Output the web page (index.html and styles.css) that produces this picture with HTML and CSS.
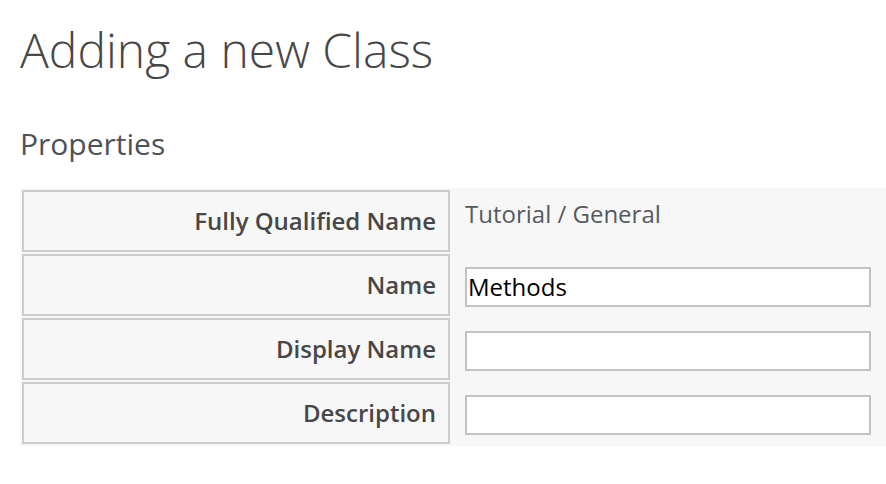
FILE: index.html
```html
<!DOCTYPE html>
<html>
<head>
<meta charset="utf-8">
<link rel="stylesheet" href="styles.css">
</head>
<body>
<div class="page">
  <h1 class="title">Adding a new Class</h1>
  <h2 class="section">Properties</h2>
  <table class="props">
    <tr>
      <th class="label">Fully Qualified Name</th>
      <td class="value"><div class="static">Tutorial / General</div></td>
    </tr>
    <tr>
      <th class="label">Name</th>
      <td class="value"><input class="field" type="text" value="Methods"></td>
    </tr>
    <tr>
      <th class="label">Display Name</th>
      <td class="value"><input class="field" type="text" value=""></td>
    </tr>
    <tr>
      <th class="label">Description</th>
      <td class="value"><input class="field" type="text" value=""></td>
    </tr>
  </table>
</div>
</body>
</html>
```
FILE: styles.css
```css
html, body {
  margin: 0;
  padding: 0;
  background: #ffffff;
  overflow: hidden;
}
body {
  font-family: "Open Sans", "Liberation Sans", sans-serif;
}
.page {
  padding-left: 20px;
}
.title {
  margin: 21px 0 0 0;
  font-size: 48px;
  font-weight: 300;
  line-height: 1.2;
  color: #474747;
}
.section {
  margin: 47px 0 0 0;
  font-size: 30px;
  font-weight: 400;
  line-height: 1.2;
  color: #4d5258;
}
.props {
  margin-top: 26px;
  width: 866px;
  border-collapse: separate;
  border-spacing: 2px;
  background: #f7f7f7;
  table-layout: fixed;
}
.label {
  width: 412px;
  height: 58px;
  padding: 0 12px 0 0;
  border: 2px solid #cccccc;
  text-align: right;
  vertical-align: middle;
  font-size: 24px;
  font-weight: 600;
  color: #474747;
  box-sizing: content-box;
}
.value {
  padding: 0 13px;
  vertical-align: top;
}
.static {
  padding-top: 8px;
  font-size: 24px;
  line-height: 1.362;
  color: #555a5f;
}
.field {
  display: block;
  margin-top: 13px;
  width: 100%;
  height: 40px;
  box-sizing: border-box;
  border: 2px solid #c2c2c2;
  background: #ffffff;
  padding: 0 1px;
  font-family: "Open Sans", "Liberation Sans", sans-serif;
  font-size: 24px;
  color: #000000;
  outline: none;
}
```
